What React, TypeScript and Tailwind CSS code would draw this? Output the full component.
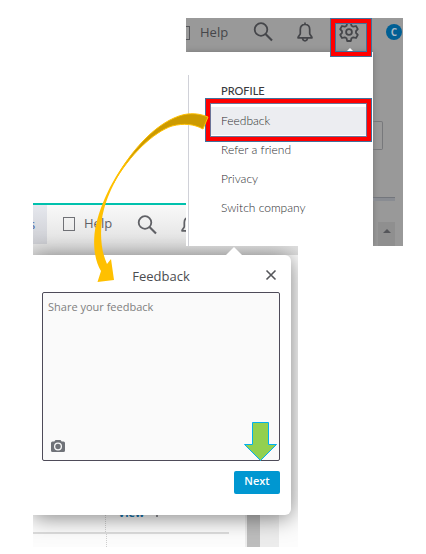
import { useState } from "react"
import clsx from "clsx"

const menuItems = ["Feedback", "Refer a friend", "Privacy", "Switch company"]

function SearchIcon({ className }: { className?: string }) {
    return (
        <svg viewBox="0 0 20 20" className={clsx("h-5 w-5 shrink-0", className)} fill="none" stroke="currentColor" strokeWidth="1.8">
            <circle cx="8" cy="7.500" r="6.300" />
            <path d="M12.500 12 19 18.500" strokeWidth="2.100" />
        </svg>
    )
}

function BellIcon({ className }: { className?: string }) {
    return (
        <svg viewBox="0 0 16 20" className={clsx("h-5 w-4 shrink-0", className)} fill="none" stroke="currentColor" strokeWidth="1.7" strokeLinejoin="round">
            <path d="M8 .5v2M8 2.500c-3 0-4.700 2.100-4.700 5v4c0 1.600-2.300 2.600-2.300 4.300h14c0-1.700-2.300-2.700-2.300-4.300v-4c0-2.900-1.700-5-4.700-5Z" />
            <path d="M5.500 16c.2 1.900 1 2.800 2.500 2.800s2.300-.9 2.500-2.800" />
        </svg>
    )
}

function GearIcon() {
    return (
        <svg viewBox="0 0 20 20" className="h-5 w-5" fill="none" stroke="currentColor" strokeWidth="1.8" strokeLinejoin="round">
            <path d="M8.200 1h3.600l.7 2.700 1.800 1 2.700-.7 1.800 3.100-1.800 2v1.800l1.800 2-1.800 3.100-2.700-.7-1.800 1-.7 2.700H8.200l-.7-2.700-1.800-1-2.700.7-1.800-3.100 1.800-2V9.100l-1.800-2L3 4l2.700.7 1.800-1Z" />
            <circle cx="10" cy="10" r="2.900" />
        </svg>
    )
}

function CameraIcon() {
    return (
        <svg viewBox="0 0 14 12" className="h-3 w-3.5" fill="#6f7278">
            <path fillRule="evenodd" d="M4.500 0h5l1.200 1.500H12.500A1.500 1.500 0 0 1 14 3v7.500a1.500 1.500 0 0 1-1.500 1.500h-11A1.500 1.500 0 0 1 0 10.500V3a1.500 1.500 0 0 1 1.500-1.500h1.800ZM7 2.500a4 4 0 1 0 0 8 4 4 0 0 0 0-8Z" />
            <circle cx="7" cy="6.500" r="2.700" />
        </svg>
    )
}

// Settings menu with the page dimmed behind it
function ProfileMenu() {
    return (
        <section className="relative z-10 ml-[153px] h-[228px] w-[217px] overflow-hidden bg-[#999999] text-[#45464a]">
            <header className="flex h-[34px] items-start pt-1">
                <span className="mt-1 h-3.5 w-1 border border-l-0 border-[#55565a]" />
                <a href="#help" className="ml-2.5 w-[53px] font-['Open_Sans',sans-serif] text-[13px] leading-5">Help</a>
                <button aria-label="Search"><SearchIcon /></button>
                <button aria-label="Notifications" className="ml-6"><BellIcon /></button>
                <button aria-label="Settings" className="ml-[26px]"><GearIcon /></button>
                <span className="mt-0.5 ml-[27px] flex h-4 w-4 shrink-0 items-center justify-center rounded-full bg-[#005f94] font-['Open_Sans',sans-serif] text-[10px] font-bold text-[#a8b8c4]">C</span>
            </header>

            <div className="flex h-[194px]">
                <nav className="w-[187px] bg-white px-0.5 pt-[23px] font-['Lato',sans-serif] shadow-[0_0_6px_rgba(0,0,0,0.25)]">
                    <div className="h-full border-l border-[#d0d1d8] pt-2 pr-1 pl-5">
                        <h2 className="pl-3 text-[11px] leading-4 font-medium text-[#393a3d]">PROFILE</h2>
                        <ul className="mt-2">
                            {menuItems.map((item, i) => (
                                <li key={item}>
                                    <a
                                        href="#menu"
                                        className={clsx("block pl-3 text-xs font-light text-[#2c2d30]", i === 0 ? "h-7 bg-[#ecedf1] leading-7" : "h-[29px] leading-[29px]")}
                                    >
                                        {item}
                                    </a>
                                </li>
                            ))}
                        </ul>
                    </div>
                </nav>
                <div className="w-[30px]">
                    <div className="mt-[69px] h-[29px] w-2.5 rounded-r-xs border border-l-0 border-[#77787b]" />
                    <div className="mt-[47px] mr-2 h-1 border-t border-[#73767c] bg-[#898c92]" />
                    <div className="mt-[21px] ml-[5px] flex h-6 w-[17px] justify-center bg-[#8f8f8f] pt-[7px]">
                        <svg viewBox="0 0 8 4" className="h-1 w-2"><path d="M0 4 4 0l4 4Z" fill="#55565a" /></svg>
                    </div>
                </div>
            </div>

            {/* highlight frames */}
            <div className="pointer-events-none absolute top-0 left-[144px] h-[39px] w-[42px] border border-[#41719c]">
                <div className="h-full border-4 border-[#ff0000]">
                    <div className="h-full border border-[#41719c]" />
                </div>
            </div>
            <svg viewBox="0 0 6 3" className="absolute top-[30px] left-[161px] h-[3px] w-1.5"><path d="M0 3 3 0l3 3Z" fill="#fff" /></svg>
            <div className="pointer-events-none absolute top-20 left-[19px] h-11 w-[167px] border border-[#41719c]">
                <div className="h-full border-4 border-[#ff0000]">
                    <div className="h-full border border-[#6b7398]" />
                </div>
            </div>
        </section>
    )
}

function FeedbackDialog() {
    const [text, setText] = useState("")

    return (
        <div className="relative h-[260px] w-[258px] rounded-r-md bg-white pr-[11px] pl-[9px] shadow-[0_2px_22px_rgba(0,0,0,0.5)]">
            <svg viewBox="0 0 16 8" className="absolute -top-2 left-[193px] h-2 w-4"><path d="M0 8 8 0l8 8Z" fill="#fff" /></svg>
            <div className="relative flex h-[37px] items-center justify-center pt-1">
                <h1 className="text-[13px] leading-5 font-medium text-[#4b4c50]">Feedback</h1>
                <button aria-label="Close" className="absolute top-[14px] right-[3px] text-[#55565a]">
                    <svg viewBox="0 0 12 12" className="h-3 w-3" fill="none" stroke="currentColor" strokeWidth="1.600">
                        <path d="m1.500 1.500 9 9m0-9-9 9" />
                    </svg>
                </button>
            </div>
            <div className="relative h-[169px]">
                <textarea
                    aria-label="Share your feedback"
                    placeholder="Share your feedback"
                    value={text}
                    onChange={(e) => setText(e.target.value)}
                    className="block h-full w-full resize-none rounded-xs border border-[#4e4b59] bg-[#fafafa] px-[5px] py-1.5 text-[11px] leading-4 outline-none placeholder:text-[#808080]"
                />
                <button aria-label="Attach screenshot" className="absolute bottom-[9px] left-[9px]"><CameraIcon /></button>
            </div>
            <button className="mt-2.5 ml-auto block h-[23px] w-[46px] rounded-xs bg-[#0097d1] pb-1 text-[11px] leading-[19px] font-semibold text-white">
                Next
            </button>
        </div>
    )
}

function FeedbackPage() {
    return (
        <section className="relative -mt-[43px] h-[344px] w-[265px] overflow-hidden bg-[#fcfcfc] font-['Open_Sans',sans-serif] text-[#606166]">
            <header className="flex h-[52px] items-start border-t-2 border-[#00c1ad] bg-linear-to-b from-[#f9f9f9] to-[#dddddd]">
                <span className="h-[39px] w-3.5 overflow-hidden bg-linear-to-b from-[#e6e8ee] to-[#cdced3]">
                    <span className="-ml-1 block text-[13px] leading-[39px] text-[#4463a0]">s</span>
                </span>
                <span className="mt-3 ml-4 h-3.5 w-3 border border-[#707176]" />
                <a href="#help" className="mt-2 ml-[9px] w-[53px] text-[13px] leading-5">Help</a>
                <button aria-label="Search" className="mt-2.5"><SearchIcon /></button>
                <button aria-label="Notifications" className="mt-2.5 ml-6"><BellIcon /></button>
            </header>
            <FeedbackDialog />
            <div className="flex h-8">
                <div className="w-[212px]">
                    <div className="flex h-[19px] w-[196px] border-b-2 border-[#dcdcdc]">
                        <div className="w-[73px] border-r border-dotted border-[#cfcfcf]" />
                        <div className="flex h-[3px] gap-3 overflow-hidden pl-3 text-[11px] leading-4 font-bold text-[#1777b0]">
                            <span className="-mt-2.5 block">View</span>
                            <span className="h-0.5 w-0.5 bg-[#909196]" />
                        </div>
                    </div>
                    <div className="h-[13px] w-[74px] border-r border-dotted border-[#cfcfcf]" />
                </div>
                <div className="w-0.5 bg-[#ededed]" />
                <div className="w-[13px] bg-[#bdbdbd]" />
                <div className="w-[19px] bg-[#ececec]" />
            </div>
        </section>
    )
}

function Arrows() {
    return (
        <svg viewBox="0 0 426 554" className="pointer-events-none absolute top-0 left-0 z-20 h-[554px] w-[426px]">
            <path
                d="M208 117C196 112 185 113 174 118C149 129 126 158 113 184C130 154 154 132 172 126C184 123 194 124 203 129Z"
                fill="#cc9a00"
                stroke="#ffc000"
                strokeWidth="1"
            />
            <path
                d="M133 153C113 176 98 208 94.500 234C93 250 96 263 101 271L97.500 282L114 280L111 259L107 264C101 251 100 235 102 219C105 201 113 181 133 153Z"
                fill="#ffc000"
            />
            <path d="M252.500 422.500H268.500V444.500H276.500L260.500 460.500L244.500 444.500H252.500Z" fill="#92d050" stroke="#00b0f0" />
        </svg>
    )
}

export default function App() {
    return (
        <main className="relative min-h-screen bg-white pt-[18px] pl-[33px]">
            <ProfileMenu />
            <FeedbackPage />
            <Arrows />
        </main>
    )
}
